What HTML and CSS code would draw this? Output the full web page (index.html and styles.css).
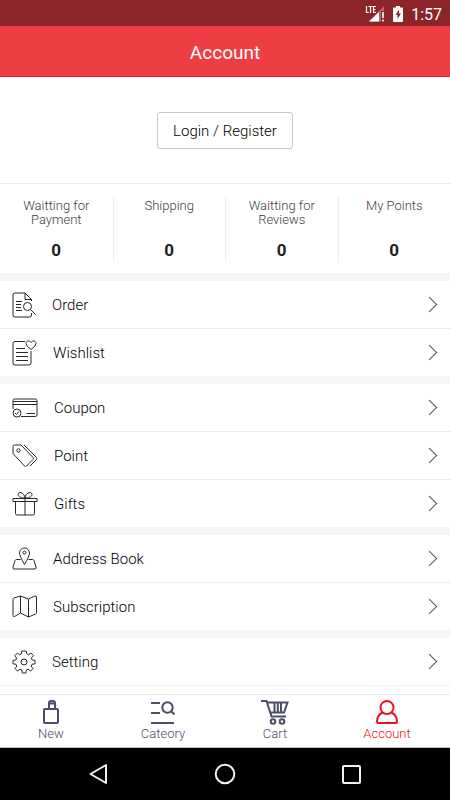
FILE: index.html
```html
<!DOCTYPE html>
<html lang="en">
<head>
<meta charset="utf-8">
<meta name="viewport" content="width=device-width, initial-scale=1">
<title>Account</title>
<link rel="stylesheet" href="styles.css">
</head>
<body>
<div class="status">
  <svg class="signal" width="20" height="18" viewBox="0 0 20 18" aria-hidden="true">
    <path d="M1.500 1v6.500h2.200M3.500 1.500h4M5.500 1v7M11 1.500H8.500v6H11M8.500 4.500h2" fill="none" stroke="#fff" stroke-width="1.200"/>
    <path d="M19 1v5h-3v10.500H4z" fill="#b0686c"/>
    <path d="M4 16.500L14 7v9.500z" fill="#fff"/>
    <path d="M18 7v6M18 14.500v2" stroke="#fff" stroke-width="1.600"/>
  </svg>
  <svg width="10" height="16" viewBox="0 0 10 16" aria-hidden="true">
    <path d="M3 0h4v1.500h2.200q.8 0 .8.800v12.900q0 .8-.8.800H.8q-.8 0-.8-.8V2.300q0-.8.800-.8H3z" fill="#fff"/>
    <path d="M6 3.500L2.500 9h2v4L8 7.500H6z" fill="#8c2529"/>
  </svg>
  <time>1:57</time>
</div>
<header class="header"><h1>Account</h1></header>
<main class="content">
  <section class="login"><button type="button">Login / Register</button></section>
  <section class="stats">
    <a href="#payment"><span>Waitting for Payment</span><b>0</b></a>
    <a href="#shipping"><span>Shipping</span><b>0</b></a>
    <a href="#reviews"><span>Waitting for Reviews</span><b>0</b></a>
    <a href="#points"><span>My Points</span><b>0</b></a>
  </section>
  <nav class="menu" aria-label="Account menu">
    <div class="group">
      <a href="#order">
        <svg width="24" height="26" viewBox="0 0 24 26"><path d="M19.500 9V7.500L13 1H3Q1 1 1 3v20q0 2 2 2h14.500q2 0 2-2v-2M13 1v6.500h6.500M4 9.500h6M4 12.500h5M4 15.500h5M4 18.500h6"/><circle cx="15.500" cy="14.500" r="4"/><path d="M18.500 17.500L23.500 22.500"/></svg>
        <span>Order</span>
      </a>
      <a href="#wishlist">
        <svg width="25" height="26" viewBox="0 0 25 26"><path d="M13 1.500H3q-2 0-2 2V23q0 2 2 2h14q2 0 2-2V11M4 8.500h9M4 12.500h12M4 16.500h12M4 20.500h12"/><path d="M19 9.500Q14 6 14 3.500C14 .7 17.500 0 19 2.500 20.500 0 24 .7 24 3.500Q24 6 19 9.500z"/></svg>
        <span>Wishlist</span>
      </a>
    </div>
    <div class="group">
      <a href="#coupon">
        <svg width="26" height="20" viewBox="0 0 26 20"><path d="M1 11V2.500Q1 1 2.500 1h21Q25 1 25 2.500V17q0 1.500-1.500 1.500H9M1 3.500h24M1 6.500h24M14.500 15.500H23"/><circle cx="5" cy="15" r="4"/><path d="M3 15l1.500 1.500L7 13.500"/></svg>
        <span>Coupon</span>
      </a>
      <a href="#point">
        <svg width="26" height="24" viewBox="0 0 26 24"><path d="M1 2.500Q1 1 2.500 1H9L21 13.500q1 1 0 2L14.500 22q-1 1-2 0L1 9.500zM12 1l12.500 12.500q1 1 0 2L18 22"/><circle cx="6.500" cy="6.500" r="1.700"/></svg>
        <span>Point</span>
      </a>
      <a href="#gifts">
        <svg width="26" height="25" viewBox="0 0 26 25"><path d="M1 7.500h24v3H1zM3.500 10.500v12q0 1.500 1.500 1.500h16q1.500 0 1.500-1.500v-12M13 7.500V24M13 7C10 7 6 6 6 3.500 6 .5 12 .5 13 7zM13 7c3 0 7-1 7-3.500C20 .5 14 .5 13 7z"/></svg>
        <span>Gifts</span>
      </a>
    </div>
    <div class="group">
      <a href="#address">
        <svg width="25" height="23" viewBox="0 0 25 23"><path d="M12.500 17.500Q7.500 9 7.500 6a5 5 0 0 1 10 0Q17.500 9 12.500 17.500zM8.500 12.500H4.500Q3.500 12.500 3 13.500L1 20q-.5 2 1 2h21q1.500 0 1-2l-2-6.500q-.5-1-1.500-1h-4"/><circle cx="12.500" cy="5.500" r="1.500"/></svg>
        <span>Address Book</span>
      </a>
      <a href="#subscription">
        <svg width="25" height="23" viewBox="0 0 25 23"><path d="M1 4.500Q1 3.500 2 3L8.500 1 16.500 4 23 1q1.500-.5 1.500 1v15.500q0 1-1 1.500L16.500 22l-8-4L2.500 21.500Q1 22 1 20.500zM8.500 1v17M16.500 4v18"/></svg>
        <span>Subscription</span>
      </a>
    </div>
    <div class="group">
      <a href="#setting">
        <svg width="24" height="24" viewBox="0 0 24 24"><path d="M9.800 1h4.400l.6 2.900 1.800.8L19 3.100 21.500 5.700 19.300 8.200l.7 1.700 3 .5v3.400l-3 .5-.8 1.800 1.900 2.500-2.500 2.500-2.500-1.900-1.700.8-.5 3h-3.600l-.5-3-1.800-.8-2.500 1.900L3 18.600l1.800-2.500-.8-1.800-3-.5v-3.400l3-.5.7-1.700L2.700 5.700 5.200 3.100l2.400 1.600 1.700-.8z" stroke-linejoin="round"/><circle cx="12" cy="12" r="3"/></svg>
        <span>Setting</span>
      </a>
    </div>
  </nav>
</main>
<footer class="bottom">
  <nav class="tabs" aria-label="Main">
    <a href="#new">
      <svg width="28" height="26" viewBox="0 0 28 26"><rect x="7" y="10" width="14" height="14" rx="1"/><path d="M12 9V4q0-2 2-2h2q2 0 2 2v5M12 4.500h6"/></svg>
      New
    </a>
    <a href="#category">
      <svg width="28" height="26" viewBox="0 0 28 26"><path d="M2 4h9M2 14h9M2 24h23"/><circle cx="18.500" cy="8.500" r="5.200"/><path d="M22 12l3.500 3.500"/></svg>
      Cateory
    </a>
    <a href="#cart">
      <svg width="28" height="26" viewBox="0 0 28 26"><path d="M0 2h5.500L10.500 17.500H25M6 3.500h20.500l-3.500 10H9.500M13.500 4v9M16.800 4v9M20 4v9" /><circle cx="12" cy="22.500" r="2.300"/><circle cx="21" cy="22.500" r="2.300"/></svg>
      Cart
    </a>
    <a class="active" href="#account" aria-current="page">
      <svg width="28" height="26" viewBox="0 0 28 26"><circle cx="14" cy="8.500" r="6.500"/><path d="M9.500 13.500C5.500 15.500 4 18.500 4 22.500q0 1.500 1 1.500h18q1 0 1-1.500c0-4-1.500-7-5.500-9"/></svg>
      Account
    </a>
  </nav>
  <div class="system">
    <button type="button" aria-label="Back"><svg width="22" height="22" viewBox="0 0 22 22"><path d="M18 2v18L2.500 11z"/></svg></button>
    <button type="button" aria-label="Home"><svg width="22" height="22" viewBox="0 0 22 22"><circle cx="11" cy="11" r="9.300"/></svg></button>
    <button type="button" aria-label="Recent apps"><svg width="22" height="22" viewBox="0 0 22 22"><rect x="3" y="3" width="17" height="17" rx="1"/></svg></button>
  </div>
</footer>
</body>
</html>
```
FILE: styles.css
```css
* { box-sizing: border-box; }
body {
  margin: 0;
  height: 100vh;
  display: flex;
  flex-direction: column;
  background: #fff;
  color: #000;
  font-family: Roboto, sans-serif;
  font-size: 15px;
  font-weight: 300;
}
a { color: inherit; text-decoration: none; }
button { font: inherit; cursor: pointer; }
svg { display: block; flex: none; }

.status {
  height: 26px;
  flex: none;
  display: flex;
  align-items: center;
  justify-content: flex-end;
  gap: 8px;
  padding: 2px 8px 0 0;
  background: #8c2529;
  color: #fff;
  font-size: 16px;
  font-weight: 400;
}
.header {
  height: 51px;
  flex: none;
  display: grid;
  place-items: center;
  padding-top: 3px;
  background: #ef3e43;
  border-bottom: 1px solid #e5282d;
  color: #fff;
}
.header h1 { margin: 0; font-size: 19px; font-weight: 400; }

.content { flex: 1; min-height: 0; overflow: hidden; }
.login { height: 106px; display: grid; place-items: center; }
.login button {
  height: 37px;
  padding: 2px 15px 0;
  border: 1px solid #c8c8c8;
  border-radius: 3px;
  background: #fff;
  color: #000;
}
.stats {
  display: grid;
  grid-template-columns: repeat(4, 1fr);
  padding: 12px 0 11px;
  border-top: 1px solid #ededef;
}
.stats a {
  height: 66px;
  padding: 3px 12px 0;
  display: flex;
  flex-direction: column;
  justify-content: space-between;
  text-align: center;
  color: #3c3c44;
  font-size: 13px;
  line-height: 14px;
}
.stats a + a { border-left: 1px solid #ededef; }
.stats b { color: #1f1f1f; font-size: 17px; font-weight: 700; line-height: 24px; }

.group { border-top: 8px solid #f5f5f7; }
.group:last-child { border-bottom: 1px solid #f0f0f2; }
.group a {
  display: flex;
  align-items: center;
  gap: 16px;
  height: 47px;
  padding: 0 15px 0 12px;
}
.group a + a { height: 48px; border-top: 1px solid #ededef; }
.group a::after {
  content: "";
  width: 10px;
  height: 10px;
  margin-left: auto;
  border: solid #505056;
  border-width: 1px 1px 0 0;
  transform: rotate(45deg);
}
.group svg { fill: none; stroke: #25282c; stroke-width: 1; }
.group span { padding-top: 1px; }

.bottom { flex: none; }
.tabs {
  height: 54px;
  display: flex;
  justify-content: space-between;
  padding: 0 33px 0 21px;
  background: #fff;
  border-top: 1px solid #e6e6e8;
  border-bottom: 1px solid #c4c4c4;
  color: #4c4d66;
  font-size: 13px;
  line-height: 18px;
}
.tabs a {
  width: 60px;
  display: flex;
  flex-direction: column;
  align-items: center;
  padding-top: 4px;
}
.tabs svg { fill: none; stroke: currentColor; stroke-width: 2; }
.tabs .active { color: #ee1118; }
.system {
  height: 52px;
  display: flex;
  align-items: center;
  justify-content: space-between;
  padding: 0 88px;
  background: #000;
}
.system button { padding: 0; border: 0; background: none; }
.system svg { fill: none; stroke: #f2f2f2; stroke-width: 2; stroke-linejoin: round; }
```
